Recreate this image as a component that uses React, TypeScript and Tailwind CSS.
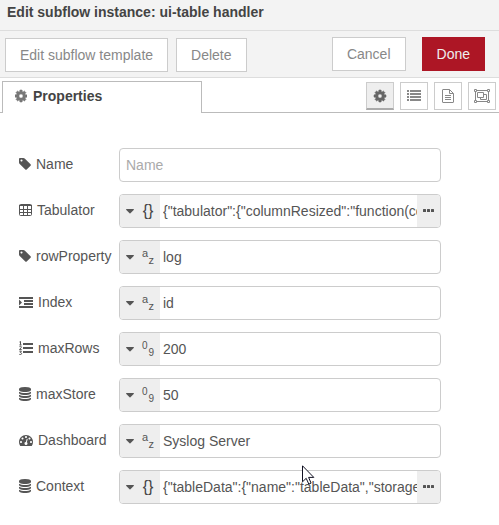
import type { ReactNode } from "react";

type Kind = "json" | "str" | "num";

function Glyph({ d, w, h = 14, cls = "" }: { d: string; w: number; h?: number; cls?: string }) {
  const units = w * 128;
  return (
    <svg width={w} height={h} viewBox={`${(1792 - units) / 2} 0 ${units} 1792`} fill="currentColor" className={`shrink-0 ${cls}`} aria-hidden="true">
      <path d={d} />
    </svg>
  );
}

const GEAR =
  "M1152 896q0-106-75-181t-181-75-181 75-75 181 75 181 181 75 181-75 75-181zm512-109v222q0 12-8 23t-20 13l-185 28q-19 54-39 91 35 50 107 138 10 12 10 25t-9 23q-27 37-99 108t-94 71q-12 0-26-9l-138-108q-44 23-91 38-16 136-29 186-7 28-36 28h-222q-14 0-24.500-8.500t-11.500-21.500l-28-184q-49-16-90-37l-141 107q-10 9-25 9-14 0-25-11-126-114-165-168-7-10-7-23 0-12 8-23 15-21 51-66.500t54-70.500q-27-50-41-99l-183-27q-13-2-21-12.500t-8-23.500v-222q0-12 8-23t19-13l186-28q14-46 39-92-40-57-107-138-10-12-10-24 0-10 9-23 26-36 98.500-107.500t94.500-71.500q13 0 26 10l138 107q44-23 91-38 16-136 29-186 7-28 36-28h222q14 0 24.500 8.500t11.500 21.500l28 184q49 16 90 37l142-107q9-9 24-9 13 0 25 10 129 119 165 170 7 8 7 22 0 12-8 23-15 21-51 66.500t-54 70.500q26 50 41 98l183 28q13 2 21 12.500t8 23.500z";
const TAG =
  "M576 448q0-53-37.500-90.500t-90.500-37.500-90.500 37.500-37.500 90.500 37.500 90.500 90.500 37.500 90.500-37.500 37.500-90.500zm1067 576q0 53-37 90l-491 492q-39 37-91 37-53 0-90-37l-715-716q-38-37-64.500-101t-26.500-117v-416q0-52 38-90t90-38h416q53 0 117 26.500t102 64.500l715 714q37 39 37 91z";
const DATABASE =
  "M896 768q237 0 443-43t325-127v170q0 69-103 128t-280 93.500-385 34.500-385-34.500-280-93.500-103-128v-170q119 84 325 127t443 43zm0 768q237 0 443-43t325-127v170q0 69-103 128t-280 93.500-385 34.500-385-34.500-280-93.500-103-128v-170q119 84 325 127t443 43zm0-384q237 0 443-43t325-127v170q0 69-103 128t-280 93.500-385 34.500-385-34.500-280-93.500-103-128v-170q119 84 325 127t443 43zm0-1152q208 0 385 34.500t280 93.500 103 128v128q0 69-103 128t-280 93.500-385 34.500-385-34.500-280-93.500-103-128v-128q0-69 103-128t280-93.500 385-34.500z";
const GAUGE =
  "M384 1152q0-53-37.500-90.500t-90.500-37.500-90.500 37.500-37.500 90.500 37.500 90.500 90.500 37.500 90.500-37.500 37.500-90.500zm192-448q0-53-37.500-90.500t-90.500-37.500-90.500 37.500-37.500 90.500 37.500 90.500 90.500 37.500 90.500-37.500 37.500-90.500zm428 481l101-382q6-26-7.500-48.500t-38.500-29.500-48 6.500-30 39.500l-101 382q-60 5-107 43.500t-63 98.500q-20 77 20 146t117 89 146-20 89-117q16-60-6-117t-72-91zm660-33q0-53-37.500-90.500t-90.500-37.500-90.500 37.500-37.500 90.500 37.500 90.500 90.500 37.500 90.500-37.500 37.500-90.500zm-640-640q0-53-37.500-90.500t-90.500-37.500-90.500 37.500-37.500 90.500 37.500 90.500 90.500 37.500 90.500-37.500 37.500-90.500zm448 192q0-53-37.500-90.500t-90.500-37.500-90.500 37.500-37.500 90.500 37.500 90.500 90.500 37.500 90.500-37.500 37.500-90.500zm320 448q0 261-141 483-19 29-54 29h-1402q-35 0-54-29-141-221-141-483 0-182 71-348t191-286 286-191 348-71 348 71 286 191 191 286 71 348z";

function TableIcon() {
  return (
    <svg width="13" height="14" viewBox="0 0 13 14" fill="none" stroke="currentColor" className="shrink-0" aria-hidden="true">
      <rect x="0.500" y="1.500" width="12" height="11" rx="1" />
      <path d="M0 2.500h13M1 6.500h11M1 9.500h11M4.500 2v10M8.500 2v10" />
    </svg>
  );
}

function IndentIcon() {
  return (
    <svg width="14" height="14" viewBox="0 0 14 14" fill="currentColor" className="shrink-0" aria-hidden="true">
      <path d="M0 2h14v2H0zM5 5h9v2H5zM5 8h9v2H5zM0 11h14v2H0zM0 4.600l3 2.900-3 2.900z" />
    </svg>
  );
}

function OrderedListIcon() {
  return (
    <svg width="14" height="14" viewBox="0 0 14 14" className="shrink-0" aria-hidden="true">
      <path d="M4 2h10v2H4zM4 6h10v2H4zM4 10h10v2H4z" fill="currentColor" />
      <path d="M0.500 1l1-.6v3.400M.4 3.900h2.200M.5 5.600c1-.8 2.200-.2 1.800.8L.5 8.600h2.200M.4 10.200h2l-1.100 1.300c1.700 0 1.700 2.100 0 2.100-.5 0-.9-.2-1.100-.4" fill="none" stroke="currentColor" />
    </svg>
  );
}

function ListIcon() {
  return (
    <svg width="14" height="12" viewBox="0 0 14 12" fill="currentColor" aria-hidden="true">
      <path d="M0 0h2v2H0zM3 0h11v2H3zM0 3h2v2H0zM3 3h11v2H3zM0 6h2v2H0zM3 6h11v2H3zM0 9h2v2H0zM3 9h11v2H3z" />
    </svg>
  );
}

function FileIcon() {
  return (
    <svg width="12" height="14" viewBox="0 0 12 14" fill="none" stroke="currentColor" aria-hidden="true">
      <path d="M1 .5h6.500l4 4v8.500q0 .5-.5.5H1q-.5 0-.5-.5V1Q.5.5 1 .5zM7.500 .5v4h4M3 6.500h6M3 8.500h6M3 10.500h6" />
    </svg>
  );
}

function GroupIcon() {
  return (
    <svg width="16" height="14" viewBox="0 0 16 14" fill="none" stroke="currentColor" aria-hidden="true">
      <path d="M3 1.500h10M3 12.500h10M1.500 3v8M14.500 3v8M.5 .5h2v2h-2zM13.500 .5h2v2h-2zM.5 11.500h2v2h-2zM13.500 11.500h2v2h-2z" />
      <path d="M3.500 3.500h6v5h-6zM9.500 5.500h3v5h-6v-2" />
    </svg>
  );
}

function Caret() {
  return (
    <svg width="8" height="5" viewBox="0 0 8 5" fill="currentColor" aria-hidden="true">
      <path d="M.5 0h7q.7.300.2.900L4.400 4.300q-.4.400-.8 0L.3.900Q-.2.300.5 0z" />
    </svg>
  );
}

function KindMark({ kind }: { kind: Kind }) {
  if (kind === "json") return <span className="w-3 text-base leading-4 text-[#444]">{"{}"}</span>;
  const [a, b] = kind === "str" ? ["a", "z"] : ["0", "9"];
  const size = kind === "str" ? "text-[11px]" : "text-[10px]";
  return (
    <span className={`flex w-3 flex-col ${size}`}>
      <span className="self-start leading-[7px]">{a}</span>
      <span className="self-end leading-[7px]">{b}</span>
    </span>
  );
}

function Row({ id, label, icon, children }: { id: string; label: string; icon: ReactNode; children: ReactNode }) {
  return (
    <div className="flex items-center">
      <label htmlFor={id} className="flex w-[100px] shrink-0 items-center gap-[5px] pb-[2px]">
        {icon}
        {label}
      </label>
      <div className="flex h-[34px] w-[70%] overflow-hidden rounded border border-[#ccc] bg-white">{children}</div>
    </div>
  );
}

const rows: { id: string; label: string; icon: ReactNode; kind: Kind; value: string }[] = [
  { id: "tabulator", label: "Tabulator", icon: <TableIcon />, kind: "json", value: '{"tabulator":{"columnResized":"function(cell){}"}}' },
  { id: "rowProperty", label: "rowProperty", icon: <Glyph d={TAG} w={12} />, kind: "str", value: "log" },
  { id: "index", label: "Index", icon: <IndentIcon />, kind: "str", value: "id" },
  { id: "maxRows", label: "maxRows", icon: <OrderedListIcon />, kind: "num", value: "200" },
  { id: "maxStore", label: "maxStore", icon: <Glyph d={DATABASE} w={12} />, kind: "num", value: "50" },
  { id: "dashboard", label: "Dashboard", icon: <Glyph d={GAUGE} w={14} />, kind: "str", value: "Syslog Server" },
  { id: "context", label: "Context", icon: <Glyph d={DATABASE} w={12} />, kind: "json", value: '{"tableData":{"name":"tableData","storage":""}}' },
];

const tools = [
  { name: "Properties", icon: <Glyph d={GEAR} w={14} cls="stroke-current stroke-[70]" />, on: true },
  { name: "Environment", icon: <ListIcon />, on: false },
  { name: "Description", icon: <FileIcon />, on: false },
  { name: "Appearance", icon: <GroupIcon />, on: false },
];

const plain = "h-[34px] border border-[#ccc] bg-white px-[14px] text-[#888]";

export default function App() {
  return (
    <div className="relative min-h-screen bg-white font-['Liberation_Sans',Arial,sans-serif] text-sm text-[#555]">
      <h1 className="h-[31px] border-b border-[#ddd] bg-[#f3f3f3] px-[7px] pt-[2px] text-sm font-bold text-[#444]">
        Edit subflow instance: ui-table handler
      </h1>
      <div className="flex h-[47px] items-center justify-between border-b border-[#ddd] bg-[#f3f3f3] pr-[14px] pl-[5px]">
        <div className="flex gap-2 pt-px">
          <button className={plain}>Edit subflow template</button>
          <button className={plain}>Delete</button>
        </div>
        <div className="flex gap-4">
          <button className={plain}>Cancel</button>
          <button className="h-[34px] bg-[#ad1625] px-[15px] text-[#eee]">Done</button>
        </div>
      </div>

      <div className="flex h-[35px] items-end pl-[2px] shadow-[inset_0_-1px_#bbb]">
        <div className="flex h-8 w-[200px] items-center gap-[6px] border border-b-0 border-[#bbb] bg-white pt-px pb-1 pl-3 font-bold text-[#444]">
          <Glyph d={GEAR} w={12} cls="stroke-current stroke-[70] text-[#777]" />
          Properties
        </div>
        <div className="mb-[3px] ml-auto flex gap-[6px] pr-[3px]">
          {tools.map((t) => (
            <button
              key={t.name}
              aria-label={t.name}
              className={`flex size-7 items-center justify-center border border-[#ccc] ${t.on ? "border-b-2 border-b-[#aaa] bg-[#eee] text-[#666]" : "bg-white text-[#888]"}`}
            >
              {t.icon}
            </button>
          ))}
        </div>
      </div>

      <form className="flex flex-col gap-3 pt-[35px] pr-5 pb-5 pl-[19px]">
        <Row id="name" label="Name" icon={<Glyph d={TAG} w={12} />}>
          <input id="name" placeholder="Name" className="min-w-0 flex-1 px-[6px] outline-none placeholder:text-[#aaa]" />
        </Row>
        {rows.map((r) => (
          <Row key={r.id} id={r.id} label={r.label} icon={r.icon}>
            <button type="button" aria-label={`${r.label} type`} className="flex w-10 shrink-0 items-center gap-2 bg-[#eee] pl-[6px]">
              <Caret />
              <KindMark kind={r.kind} />
            </button>
            <input id={r.id} defaultValue={r.value} className="min-w-0 flex-1 pl-[3px] outline-none" />
            {r.kind === "json" && (
              <button type="button" aria-label={`Edit ${r.label}`} className="flex w-[23px] shrink-0 items-center justify-center bg-[#eee] pb-px">
                <svg width="11" height="3" viewBox="0 0 11 3" fill="currentColor" aria-hidden="true">
                  <rect width="3" height="3" rx="0.500" />
                  <rect x="4" width="3" height="3" rx="0.500" />
                  <rect x="8" width="3" height="3" rx="0.500" />
                </svg>
              </button>
            )}
          </Row>
        ))}
      </form>

      <svg width="13" height="20" viewBox="0 0 13 20" className="pointer-events-none absolute top-[465px] left-[302px]" aria-hidden="true">
        <path d="M.5.800v16l3.700-3.500 2.600 5.800 2.300-1-2.500-5.700h5.200z" fill="#fff" stroke="#112" strokeWidth="1" />
      </svg>
    </div>
  );
}
